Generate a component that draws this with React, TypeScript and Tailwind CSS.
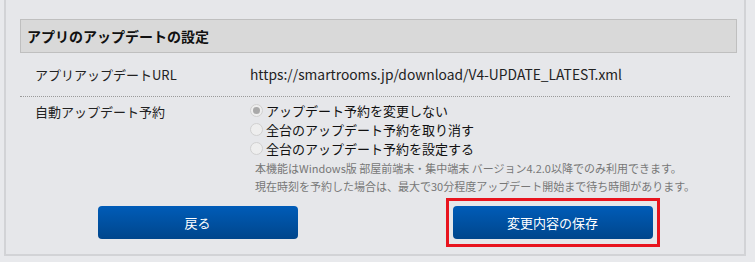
import React, { useState } from "react";

const FONT = { fontFamily: '"Noto Sans CJK JP", "Noto Sans", sans-serif' };

const options = [
  "アップデート予約を変更しない",
  "全台のアップデート予約を取り消す",
  "全台のアップデート予約を設定する",
];

function Radio({ checked }: { checked: boolean }) {
  return (
    <span className="w-[13px] h-[13px] rounded-full border border-[#d0d0d0] bg-[#eeeeee] flex items-center justify-center flex-shrink-0">
      {checked && <span className="w-[7px] h-[7px] rounded-full bg-[#a9a9a9]" />}
    </span>
  );
}

export default function App() {
  const [selected] = useState(0);

  return (
    <div className="w-[755px] h-[262px] overflow-hidden bg-[#e8e9ec] text-[#222]" style={FONT}>
      <div className="ml-[4px] w-[742px] border-x-2 border-b-2 border-[#d2d3d6] bg-[#e6e7ea] pt-[19px] pl-[14px] pr-[7px] pb-[7px]">
        {/* Section header */}
        <div className="h-[34px] border border-[#bfbfbf] bg-[#d9d9d9] flex items-center pl-[6px]">
          <h2 className="text-[14px] font-bold text-[#111]">アプリのアップデートの設定</h2>
        </div>

        {/* URL row */}
        <div className="flex items-center h-[44px] mr-[7px] border-b border-dotted border-[#9a9a9a]">
          <div className="w-[230px] pl-[15px] text-[13px]">アプリアップデートURL</div>
          <div className="text-[13.8px] text-[#222]">https://smartrooms.jp/download/V4-UPDATE_LATEST.xml</div>
        </div>

        {/* Auto update row */}
        <div className="flex pt-[4px] mr-[7px]">
          <div className="w-[230px] pl-[15px] text-[13px] leading-[19px] pt-[1px]">自動アップデート予約</div>
          <div className="flex flex-col">
            {options.map((opt, i) => (
              <label key={opt} className="flex items-center gap-[3px] h-[19px] text-[13px] text-[#111]">
                <Radio checked={i === selected} />
                <span>{opt}</span>
              </label>
            ))}
            <p className="pl-[5px] mt-[1px] text-[11px] leading-[18px] text-[#777] whitespace-nowrap">
              本機能はWindows版 部屋前端末・集中端末 バージョン4.2.0以降でのみ利用できます。
              <br />
              現在時刻を予約した場合は、最大で30分程度アップデート開始まで待ち時間があります。
            </p>
          </div>
        </div>

        {/* Buttons */}
        <div className="flex mt-[3px] mr-[7px]">
          <div className="flex-1 flex justify-center">
            <div className="px-[4px] py-[5px] border-[3px] border-transparent">
              <button className="w-[200px] h-[33px] rounded-[4px] bg-gradient-to-b from-[#005cb8] to-[#00468c] text-white text-[13px]">
                戻る
              </button>
            </div>
          </div>
          <div className="flex-1 flex justify-center">
            <div className="px-[4px] py-[5px] border-[3px] border-[#e8141e]">
              <button className="w-[200px] h-[33px] rounded-[4px] bg-gradient-to-b from-[#005cb8] to-[#00468c] text-white text-[13px]">
                変更内容の保存
              </button>
            </div>
          </div>
        </div>
      </div>
    </div>
  );
}
